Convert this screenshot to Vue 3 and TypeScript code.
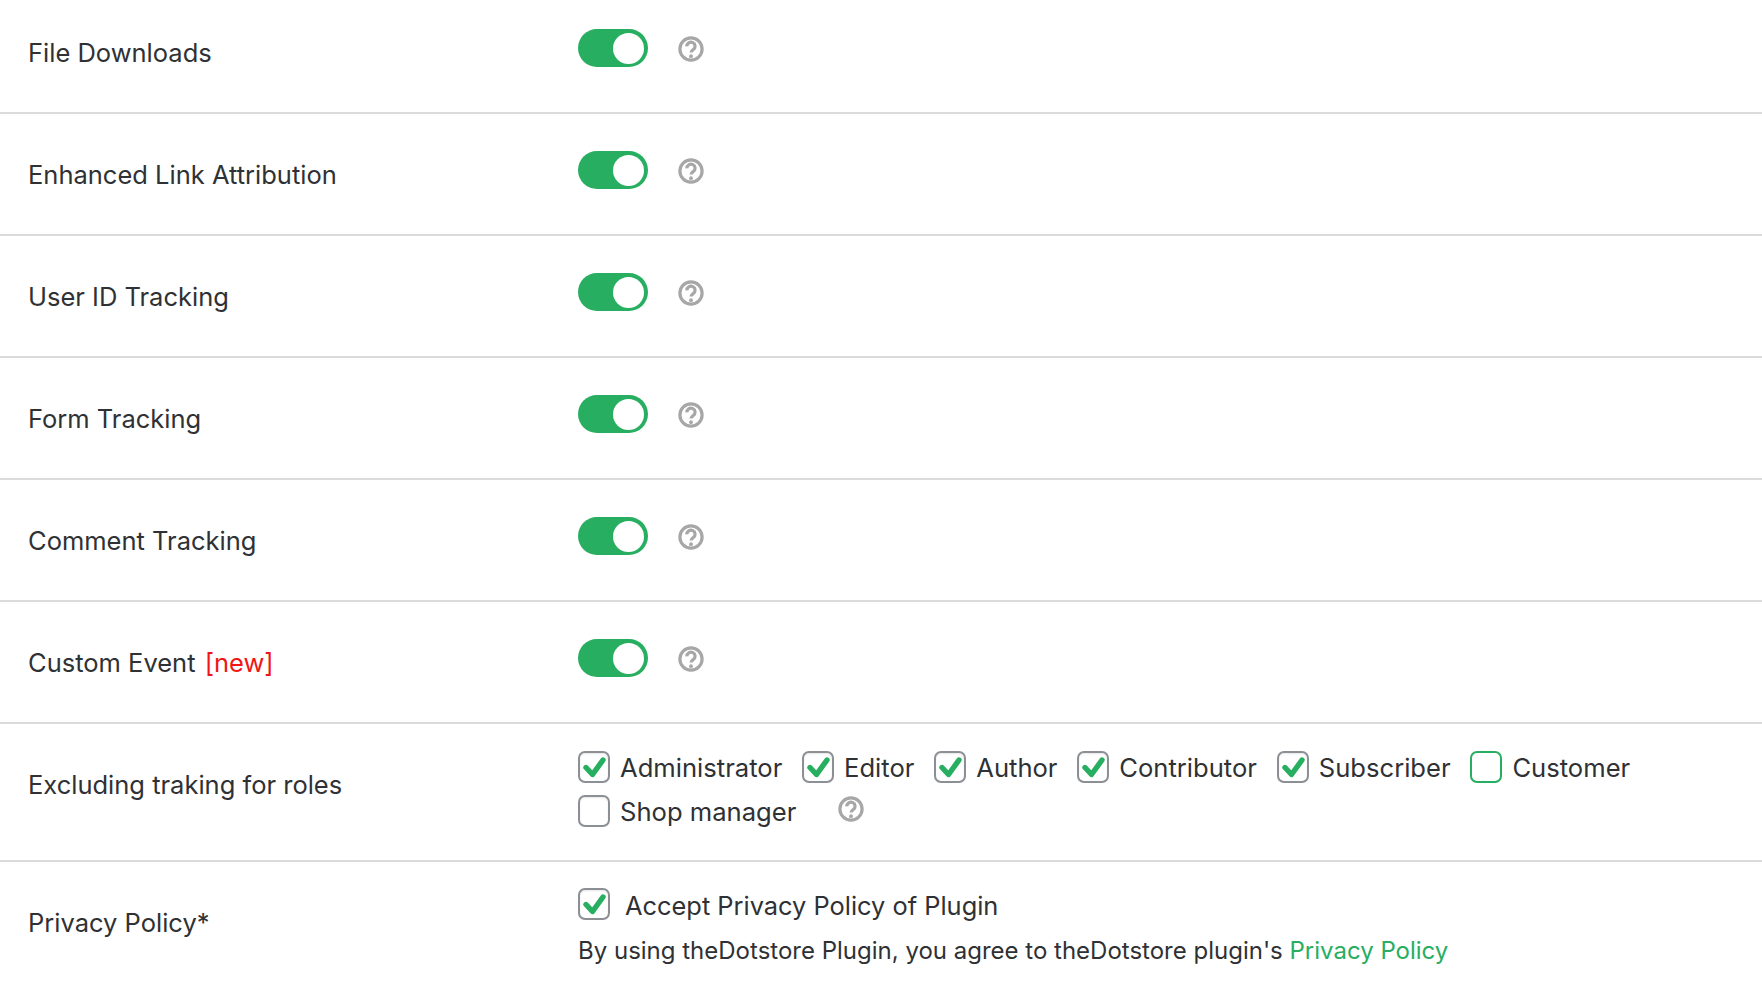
<script setup lang="ts">
const toggles: { label: string; isNew?: boolean }[] = [
  { label: 'File Downloads' },
  { label: 'Enhanced Link Attribution' },
  { label: 'User ID Tracking' },
  { label: 'Form Tracking' },
  { label: 'Comment Tracking' },
  { label: 'Custom Event', isNew: true },
]
const roles: { label: string; checked: boolean; focus?: boolean }[] = [
  { label: 'Administrator', checked: true },
  { label: 'Editor', checked: true },
  { label: 'Author', checked: true },
  { label: 'Contributor', checked: true },
  { label: 'Subscriber', checked: true },
  { label: 'Customer', checked: false, focus: true },
  { label: 'Shop manager', checked: false },
]
</script>

<template>
  <main class="page">
    <section v-for="t in toggles" :key="t.label" class="row">
      <div class="label">{{ t.label }}<span v-if="t.isNew" class="new"> [new]</span></div>
      <div class="field">
        <span class="toggle"><span class="knob"></span></span>
        <svg class="help" viewBox="0 0 26 26" aria-hidden="true">
          <circle cx="13" cy="13" r="11.1" fill="none" stroke="#a7a7a7" stroke-width="3.2" />
          <path d="M8.9 10.4a4.1 4 0 1 1 6.4 3.1c-1.5 1-2.3 1.5-2.3 3.1" fill="none" stroke="#a7a7a7" stroke-width="3.2" />
          <circle cx="13" cy="20.2" r="1.9" fill="#a7a7a7" />
        </svg>
      </div>
    </section>

    <section class="row roles-row">
      <div class="label">Excluding traking for roles</div>
      <div class="roles">
        <label v-for="r in roles" :key="r.label" class="role">
          <span class="box" :class="{ focus: r.focus }">
            <svg v-if="r.checked" viewBox="0 0 32 32" aria-hidden="true">
              <path d="M8 16.5l6.5 7L25 9" fill="none" stroke="#27ae60" stroke-width="5.4" stroke-linecap="round" stroke-linejoin="round" />
            </svg>
          </span>
          <span>{{ r.label }}</span>
        </label>
        <svg class="help role-help" viewBox="0 0 26 26" aria-hidden="true">
          <circle cx="13" cy="13" r="11.1" fill="none" stroke="#a7a7a7" stroke-width="3.2" />
          <path d="M8.9 10.4a4.1 4 0 1 1 6.4 3.1c-1.5 1-2.3 1.5-2.3 3.1" fill="none" stroke="#a7a7a7" stroke-width="3.2" />
          <circle cx="13" cy="20.2" r="1.9" fill="#a7a7a7" />
        </svg>
      </div>
    </section>

    <section class="row privacy-row">
      <div class="label">Privacy Policy*</div>
      <div class="privacy">
        <label class="accept">
          <span class="box">
            <svg viewBox="0 0 32 32" aria-hidden="true">
              <path d="M8 16.5l6.5 7L25 9" fill="none" stroke="#27ae60" stroke-width="5.4" stroke-linecap="round" stroke-linejoin="round" />
            </svg>
          </span>
          <span class="accept-text">Accept Privacy Policy of Plugin</span>
        </label>
        <p class="note">By using theDotstore Plugin, you agree to theDotstore plugin's <a href="#" class="link">Privacy Policy</a></p>
      </div>
    </section>
  </main>
</template>

<style scoped>
.page {
  width: 1762px;
  height: 986px;
  overflow: hidden;
  background: #fff;
  color: #2f3134;
  font-family: Inter, "Liberation Sans", sans-serif;
  font-size: 25.5px;
}
.row {
  display: flex;
  height: 122px;
  box-sizing: border-box;
  border-bottom: 2px solid #dbdbdb;
  padding-left: 28px;
}
.row:first-child {
  height: 114px;
}
.label {
  width: 550px;
  flex: none;
  padding-top: 31px;
  line-height: 60px;
}
.row:first-child .label {
  padding-top: 23px;
}
.new {
  color: #f01616;
  margin-left: 2px;
}
.field {
  display: flex;
  align-items: flex-start;
  gap: 30px;
  padding-top: 37px;
}
.row:first-child .field {
  padding-top: 29px;
}
.toggle {
  display: flex;
  justify-content: flex-end;
  align-items: center;
  width: 70px;
  height: 38px;
  box-sizing: border-box;
  padding-right: 4px;
  border-radius: 19px;
  background: #27ae60;
}
.knob {
  width: 31px;
  height: 31px;
  border-radius: 50%;
  background: #fff;
}
.help {
  width: 26px;
  height: 26px;
  flex: none;
  margin-top: 7px;
}
.roles-row {
  height: 138px;
}
.roles {
  display: flex;
  flex-wrap: wrap;
  align-content: flex-start;
  row-gap: 12px;
  column-gap: 19.8px;
  width: 1150px;
  padding-top: 27px;
  font-size: 25.6px;
}
.role, .accept {
  display: flex;
  align-items: center;
  gap: 10px;
  height: 32px;
}
.accept {
  gap: 15px;
  font-size: 25.4px;
}
.accept-text {
  padding-top: 2px;
}
.box {
  width: 32px;
  height: 32px;
  box-sizing: border-box;
  border: 2.5px solid #8c8f94;
  border-radius: 7px;
  background: #fff;
  box-shadow: inset 0 1px 2px rgba(0, 0, 0, .1);
  flex: none;
  display: flex;
  align-items: center;
  justify-content: center;
}
.box svg {
  width: 32px;
  height: 32px;
  flex: none;
}
.box.focus {
  border-color: #27ae60;
  box-shadow: none;
}
.role-help {
  margin: 1px 0 0 22px;
}
.privacy-row {
  border-bottom: 0;
}
.privacy {
  padding-top: 26px;
}
.note {
  margin: 16px 0 0;
  font-size: 24px;
}
.link {
  color: #27ae60;
  text-decoration: none;
}
</style>
